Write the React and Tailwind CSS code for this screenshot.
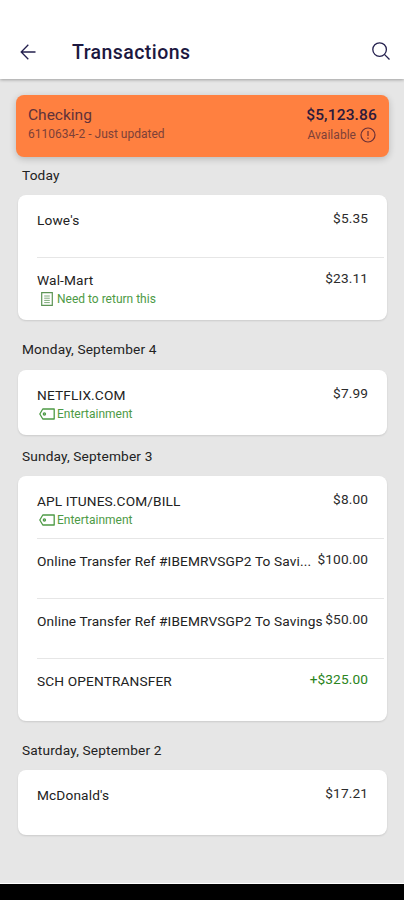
const groups = [
  {
    label: "Today",
    labelClass: "h-[38px] pt-[9px]",
    items: [
      { name: "Lowe's", amount: "$5.35" },
      { name: "Wal-Mart", amount: "$23.11", note: "Need to return this", icon: "note" },
    ],
  },
  {
    label: "Monday, September 4",
    labelClass: "h-[50px] pt-[20px]",
    items: [{ name: "NETFLIX.COM", amount: "$7.99", note: "Entertainment", icon: "tag" }],
  },
  {
    label: "Sunday, September 3",
    labelClass: "h-[41px] pt-[12px]",
    items: [
      { name: "APL ITUNES.COM/BILL", amount: "$8.00", note: "Entertainment", icon: "tag" },
      { name: "Online Transfer Ref #IBEMRVSGP2 To Savi...", amount: "$100.00" },
      { name: "Online Transfer Ref #IBEMRVSGP2 To Savings", amount: "$50.00" },
      { name: "SCH OPENTRANSFER", amount: "+$325.00", credit: true },
    ],
  },
  {
    label: "Saturday, September 2",
    labelClass: "h-[49px] pt-[20px]",
    items: [{ name: "McDonald's", amount: "$17.21" }],
  },
];

function NoteIcon() {
  return (
    <svg className="ml-[4px] mr-[4px] h-[14px] w-[12px]" viewBox="0 0 12 14" fill="none" stroke="#5c9455" strokeWidth="1.2">
      <path d="M0.7 0.7H11.3V13.3H0.7Z" />
      <path d="M3.2 4H8.8M3.2 6.2H8.8M3.2 8.4H8.8M3.2 10.6H8.8" strokeWidth="0.8" />
    </svg>
  );
}

function TagIcon() {
  return (
    <svg className="ml-[2px] mr-[2px] h-[12px] w-[16px]" viewBox="0 0 16 12" fill="none" stroke="#4d9a45" strokeWidth="1.3">
      <path d="M3.8 1H15.2V11H3.8L0.8 6Z" strokeLinejoin="round" />
      <circle cx="5.4" cy="5.9" r="1.1" />
    </svg>
  );
}

function Row({ item, last }) {
  return (
    <div className={`ml-[19px] mr-[3px] flex h-[60px] justify-between border-b ${last ? "border-transparent" : "border-[#e6e6e6]"}`}>
      <div className="flex flex-col pt-[14px]">
        <span className="text-[13.7px] leading-[17px] tracking-[0.13px] whitespace-nowrap text-[#222]">{item.name}</span>
        {item.note && (
          <span className="mt-[2px] flex h-[16px] items-center text-[12px] leading-[16px] whitespace-nowrap text-[#4d9a45]">
            {item.icon === "note" ? <NoteIcon /> : <TagIcon />}
            {item.note}
          </span>
        )}
      </div>
      <span className={`pt-[12px] pr-[16px] text-[13.7px] leading-[17px] tracking-[0.1px] ${item.credit ? "text-[#2a8420]" : "text-[#2b2b2b]"}`}>
        {item.amount}
      </span>
    </div>
  );
}

export default function App() {
  return (
    <div className="flex h-[900px] w-[404px] flex-col overflow-hidden bg-[#e6e6e6] font-[Roboto,'Liberation_Sans',sans-serif]">
      <header className="z-10 flex h-[79px] shrink-0 items-start bg-white pt-[40px] shadow-[0_1px_3px_rgba(0,0,0,0.3)]">
        <svg className="mt-[4px] ml-[20px] h-[16px] w-[16px]" viewBox="0 0 16 16" fill="none" stroke="#24204e" strokeWidth="1.3">
          <path d="M15.5 8H1.5M8.3 0.8L1.2 8L8.3 15.2" />
        </svg>
        <h1 className="mt-[1px] ml-[36px] flex-1 text-[19.5px] leading-[24px] font-medium tracking-[0.43px] text-[#1c1840]">Transactions</h1>
        <svg className="mt-[2px] mr-[14px] h-[18px] w-[18px]" viewBox="0 0 18 18" fill="none" stroke="#24204e" strokeWidth="1.3">
          <circle cx="7.6" cy="7.6" r="6.8" />
          <path d="M12.4 12.4L17.5 17.5" />
        </svg>
      </header>
      <main className="flex flex-1 flex-col">
        <section className="mt-[16px] mr-[15px] ml-[16px] flex h-[62px] shrink-0 justify-between rounded-[8px] bg-[#ff8040] pr-[12px] pl-[12px] shadow-[0_2px_7px_rgba(0,0,0,0.2)]">
          <div className="flex flex-col pt-[10px]">
            <span className="text-[15.5px] leading-[20px] text-[#61323a]">Checking</span>
            <span className="text-[12px] leading-[19px] text-[#7d4038]">6110634-2 - Just updated</span>
          </div>
          <div className="flex flex-col items-end pt-[10px]">
            <span className="text-[15.5px] leading-[20px] font-medium tracking-[0.15px] text-[#2c1a3c]">$5,123.86</span>
            <span className="flex items-center text-[12px] leading-[20px] tracking-[0.03px] text-[#7d4038]">
              Available
              <svg className="mr-[1px] ml-[4px] h-[16px] w-[16px]" viewBox="0 0 16 16" fill="none" stroke="#6b3036" strokeWidth="1.2">
                <circle cx="8" cy="8" r="7" />
                <path d="M8 4V9M8 10.6V12" />
              </svg>
            </span>
          </div>
        </section>
        {groups.map((group) => (
          <section key={group.label} className="mr-[17px] ml-[18px] shrink-0">
            <h2 className={`pl-[4px] text-[13.7px] leading-[18px] font-normal tracking-[0.15px] text-[#222] ${group.labelClass}`}>{group.label}</h2>
            <div className="rounded-[8px] bg-white pt-[3px] pb-[2px] shadow-[0_1px_2px_rgba(0,0,0,0.12)]">
              {group.items.map((item, i) => (
                <Row key={item.name} item={item} last={i === group.items.length - 1} />
              ))}
            </div>
          </section>
        ))}
      </main>
      <footer className="h-[17px] shrink-0 border-t border-white bg-black" />
    </div>
  );
}
